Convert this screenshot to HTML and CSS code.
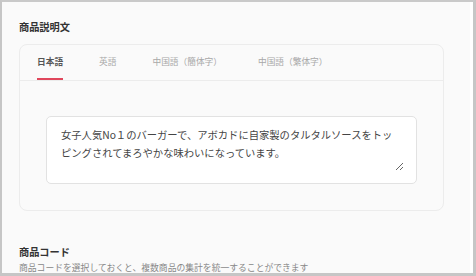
FILE: index.html
```html
<!DOCTYPE html>
<html lang="ja">
<head>
<meta charset="utf-8">
<link rel="stylesheet" href="styles.css">
</head>
<body>
<div class="frame">
  <h2 class="section-title">商品説明文</h2>
  <div class="card">
    <div class="tabs">
      <div class="tab active">日本語</div>
      <div class="tab">英語</div>
      <div class="tab">中国語（簡体字）</div>
      <div class="tab">中国語（繁体字）</div>
    </div>
    <div class="card-body">
      <div class="field">
        <textarea class="desc">女子人気No１のバーガーで、アボカドに自家製のタルタルソースをトッピングされてまろやかな味わいになっています。</textarea>
      </div>
    </div>
  </div>
  <h2 class="section-title code-title">商品コード</h2>
  <p class="hint">商品コードを選択しておくと、複数商品の集計を統一することができます</p>
</div>
</body>
</html>
```
FILE: styles.css
```css
* { box-sizing: border-box; }
html, body { margin: 0; padding: 0; background: #fff; }
body { font-family: "Noto Sans CJK JP", "Noto Sans", sans-serif; }

.frame {
  width: 476px;
  height: 276px;
  overflow: hidden;
  background: #fafafa;
  border-left: 2px solid #c6c6c6;
  border-top: 2px solid #c9c9c9;
  border-right: 3px solid #c6c6c6;
  border-bottom: 3px solid #c6c6c6;
  box-shadow: inset -3px 0 0 #ffffff;
  padding: 18px 0 0 17px;
}

.section-title {
  margin: 0 0 10px;
  font-size: 10.2px;
  line-height: 14px;
  font-weight: 700;
  color: #333;
}

.card {
  width: 425px;
  height: 167px;
  border: 1px solid #ececec;
  border-radius: 8px;
  background: #fafafa;
}

.tabs {
  display: flex;
  height: 36px;
  padding-left: 17px;
  border-bottom: 1px solid #ececec;
}

.tab {
  height: 35px;
  line-height: 34px;
  margin-right: 36px;
  font-size: 8.7px;
  color: #a8a8a8;
  border-bottom: 2px solid transparent;
}

.tab.active {
  color: #555;
  font-weight: 700;
  border-bottom-color: #e0475c;
}

.card-body {
  padding: 35px 26px 0;
}

.field {
  width: 371px;
  height: 68px;
  padding: 9px 12px 12px 14px;
  border: 1px solid #e2e2e2;
  border-radius: 5px;
  background: #fff;
}

.desc {
  display: block;
  width: 100%;
  height: 100%;
  margin: 0;
  padding: 0 4px 0 0;
  border: none;
  background: transparent;
  font-family: "Noto Sans CJK JP", "Noto Sans", sans-serif;
  font-size: 10.3px;
  line-height: 18px;
  color: #444;
  resize: vertical;
  outline: none;
  overflow: hidden;
}

.code-title {
  margin: 34px 0 0;
}

.hint {
  margin: 2px 0 0;
  font-size: 8.8px;
  line-height: 13px;
  color: #888;
}
```
